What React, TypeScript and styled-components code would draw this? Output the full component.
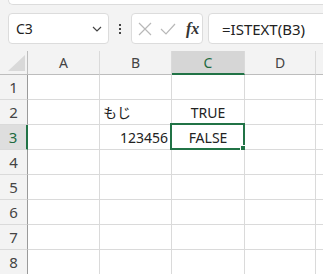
import React from "react";
import styled, { createGlobalStyle } from "styled-components";

const GlobalStyle = createGlobalStyle`
  html, body {
    margin: 0;
    padding: 0;
    background: #f3f3f3;
    overflow: hidden;
  }
  body {
    font-family: "Noto Sans", "Noto Sans CJK JP", sans-serif;
    color: #222;
  }
`;

const Page = styled.div`
  width: 323px;
  height: 274px;
  overflow: hidden;
  background: #f3f3f3;
`;

const TopStrip = styled.div`
  margin-left: 8px;
  height: 4px;
  background: #fff;
  border-left: 1px solid #dcdcdc;
  border-bottom: 1px solid #dcdcdc;
  border-bottom-left-radius: 6px;
`;

const FormulaBar = styled.div`
  display: flex;
  align-items: center;
  height: 31px;
  margin-top: 8px;
  padding-left: 8px;
`;

const Box = styled.div<{ $w: number; $gap?: number }>`
  box-sizing: border-box;
  flex: 0 0 ${({ $w }) => `${$w}px`};
  height: 31px;
  width: ${({ $w }) => `${$w}px`};
  margin-left: ${({ $gap }) => ($gap ? `${$gap}px` : "0")};
  background: #fff;
  border: 1px solid #dcdcdc;
  border-radius: 4px;
  display: flex;
  align-items: center;
`;

const NameText = styled.span`
  font-size: 14px;
  margin-left: 7px;
  flex: 1;
  color: #222;
`;

const Chevron = styled.svg`
  margin-right: 6px;
`;

const Dots = styled.div`
  flex: 0 0 22px;
  width: 22px;
  display: flex;
  flex-direction: column;
  align-items: center;
  gap: 2px;
  span {
    width: 2px;
    height: 2px;
    background: #444;
  }
`;

const FxIcons = styled.div`
  display: flex;
  align-items: center;
  padding-left: 6px;
  gap: 8px;
`;

const FxLabel = styled.span`
  font-family: "Liberation Serif", "DejaVu Serif", serif;
  font-style: italic;
  font-weight: bold;
  font-size: 16px;
  color: #333;
  margin-left: 2px;
`;

const FormulaText = styled.span`
  font-size: 15px;
  margin-left: 13px;
  color: #222;
  white-space: nowrap;
`;

const Sheet = styled.div`
  margin-top: 7px;
  display: grid;
  grid-template-columns: 28px 72px 72px 73px 71px 72px;
  grid-template-rows: 24px repeat(8, 25px);
`;

const Corner = styled.div`
  position: relative;
  background: #f3f3f3;
  border-right: 1px solid #bdbdbd;
  border-bottom: 1px solid #bdbdbd;
  box-sizing: border-box;
`;

const CornerTri = styled.div`
  position: absolute;
  right: 2px;
  bottom: 3px;
  width: 0;
  height: 0;
  border-left: 17px solid transparent;
  border-bottom: 16px solid #d9d9d9;
`;

const ColHead = styled.div<{ $active?: boolean }>`
  box-sizing: border-box;
  display: flex;
  align-items: center;
  justify-content: center;
  font-size: 14px;
  background: ${({ $active }) => ($active ? "#d6d6d6" : "#f3f3f3")};
  color: ${({ $active }) => ($active ? "#1e6b41" : "#444")};
  border-right: 1px solid #dadada;
  border-bottom: ${({ $active }) =>
    $active ? "2px solid #217346" : "1px solid #bdbdbd"};
`;

const RowHead = styled.div<{ $active?: boolean }>`
  box-sizing: border-box;
  display: flex;
  align-items: center;
  justify-content: center;
  font-size: 15px;
  background: ${({ $active }) => ($active ? "#dedede" : "#f3f3f3")};
  color: ${({ $active }) => ($active ? "#1e6b41" : "#444")};
  border-bottom: 1px solid #dadada;
  border-right: ${({ $active }) =>
    $active ? "2px solid #217346" : "1px solid #9a9a9a"};
`;

const Cell = styled.div<{ $align?: "left" | "center" | "right" }>`
  position: relative;
  box-sizing: border-box;
  background: #fff;
  border-right: 1px solid #dadada;
  border-bottom: 1px solid #dadada;
  display: flex;
  align-items: center;
  justify-content: ${({ $align }) =>
    $align === "right" ? "flex-end" : $align === "center" ? "center" : "flex-start"};
  padding: 0 3px;
  font-size: 14px;
  color: #222;
  white-space: nowrap;
`;

const Selection = styled.div`
  position: absolute;
  left: -2px;
  top: -2px;
  right: -1px;
  bottom: -1px;
  border: 2px solid #217346;
  pointer-events: none;
`;

const Handle = styled.div`
  position: absolute;
  right: -4px;
  bottom: -4px;
  width: 5px;
  height: 5px;
  background: #217346;
  border: 1px solid #fff;
`;

// E is only partly in view, so its letter is not shown
const cols = [
  { id: "A", label: "A" },
  { id: "B", label: "B" },
  { id: "C", label: "C" },
  { id: "D", label: "D" },
  { id: "E", label: "" },
];

const data: Record<string, { text: string; align: "left" | "center" | "right" }> = {
  B2: { text: "もじ", align: "left" },
  C2: { text: "TRUE", align: "center" },
  B3: { text: "123456", align: "right" },
  C3: { text: "FALSE", align: "center" },
};

export default function App() {
  const rows = [1, 2, 3, 4, 5, 6, 7, 8];
  return (
    <Page>
      <GlobalStyle />
      <TopStrip />
      <FormulaBar>
        <Box $w={101}>
          <NameText>C3</NameText>
          <Chevron width="10" height="6" viewBox="0 0 10 6">
            <path d="M1 1 L5 5 L9 1" fill="none" stroke="#444" strokeWidth="1.2" />
          </Chevron>
        </Box>
        <Dots>
          <span />
          <span />
          <span />
        </Dots>
        <Box $w={72}>
          <FxIcons>
            <svg width="14" height="14" viewBox="0 0 14 14">
              <path d="M1 1 L13 13 M13 1 L1 13" stroke="#b8b8b8" strokeWidth="1.2" fill="none" />
            </svg>
            <svg width="16" height="12" viewBox="0 0 16 12">
              <path d="M1 6 L6 11 L15 1" stroke="#b8b8b8" strokeWidth="1.2" fill="none" />
            </svg>
            <FxLabel>fx</FxLabel>
          </FxIcons>
        </Box>
        <Box $w={140} $gap={5}>
          <FormulaText>=ISTEXT(B3)</FormulaText>
        </Box>
      </FormulaBar>
      <Sheet>
        <Corner>
          <CornerTri />
        </Corner>
        {cols.map((c) => (
          <ColHead key={c.id} $active={c.id === "C"}>
            {c.label}
          </ColHead>
        ))}
        {rows.map((r) => (
          <React.Fragment key={r}>
            <RowHead $active={r === 3}>{r}</RowHead>
            {cols.map(({ id }) => {
              const d = data[`${id}${r}`];
              return (
                <Cell key={id} $align={d?.align}>
                  {d?.text}
                  {id === "C" && r === 3 && (
                    <Selection>
                      <Handle />
                    </Selection>
                  )}
                </Cell>
              );
            })}
          </React.Fragment>
        ))}
      </Sheet>
    </Page>
  );
}
